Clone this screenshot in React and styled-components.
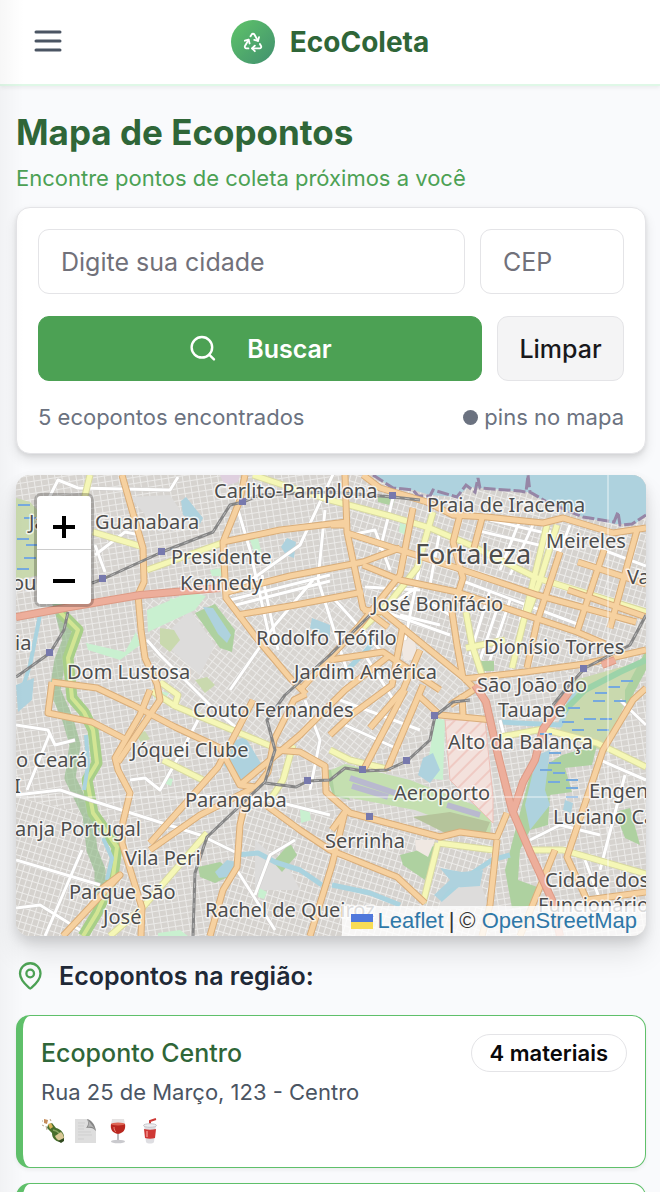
import React from "react";
import styled, { createGlobalStyle } from "styled-components";

const GlobalStyle = createGlobalStyle`
  *, *::before, *::after { box-sizing: border-box; }
  body {
    margin: 0;
    background: #f9fafc;
    font-family: Inter, "Liberation Sans", sans-serif;
    color: #1f2937;
  }
  h1, h2, h3, p, ul { margin: 0; padding: 0; }
  button, input { font: inherit; }
`;

const Page = styled.div`
  position: relative;
  overflow-x: hidden;

  &::before {
    content: "";
    position: absolute;
    z-index: 2;
    inset: 0 auto 0 0;
    width: 24px;
    background: linear-gradient(90deg, rgba(0, 0, 0, 0.03), transparent);
    pointer-events: none;
  }
`;

const Header = styled.header`
  display: grid;
  grid-template-columns: 1fr auto 1fr;
  align-items: center;
  height: 86px;
  padding: 0 28px;
  background: #fff;
  border-bottom: 2px solid #dff8e7;
  box-shadow: 0 2px 4px rgba(0, 0, 0, 0.06);
`;

const MenuButton = styled.button`
  display: flex;
  justify-self: start;
  padding: 0;
  border: 0;
  background: none;
  color: #4b5563;
`;

const Brand = styled.a`
  display: flex;
  align-items: center;
  gap: 15px;
  color: #2f6638;
  font-size: 28px;
  line-height: 40px;
  font-weight: 700;
  text-decoration: none;
`;

const BrandMark = styled.span`
  display: grid;
  place-items: center;
  width: 44px;
  height: 44px;
  border-radius: 50%;
  background: linear-gradient(135deg, #5fc469, #41906f);
`;

const Main = styled.main`
  padding: 22px 14px 22px 16px;
`;

const Title = styled.h1`
  color: #2f6638;
  font-size: 35px;
  line-height: 48px;
  font-weight: 700;
`;

const Subtitle = styled.p`
  margin-top: 6px;
  color: #4ca154;
  font-size: 22px;
  line-height: 32px;
`;

const SearchCard = styled.form`
  display: flex;
  flex-direction: column;
  gap: 22px;
  margin-top: 13px;
  padding: 21px;
  background: #fff;
  border: 1px solid #e4e4e7;
  border-radius: 14px;
  box-shadow: 0 6px 12px rgba(0, 0, 0, 0.1), 0 2px 4px rgba(0, 0, 0, 0.08);
`;

const FormRow = styled.div`
  display: flex;
  gap: 15px;
`;

const Field = styled.input`
  flex: ${(p) => (p.$narrow ? "0 0 144px" : "1 1 0")};
  min-width: 0;
  height: 65px;
  padding: 0 22px;
  border: 1px solid #e4e4e7;
  border-radius: 11px;
  background: #fff;
  font-size: 25px;

  &::placeholder { color: #71717a; opacity: 1; }
`;

const Button = styled.button`
  display: flex;
  flex: ${(p) => (p.$primary ? "1 1 0" : "0 0 127px")};
  align-items: center;
  justify-content: center;
  gap: 30px;
  height: 65px;
  padding: 0;
  border: 1px solid ${(p) => (p.$primary ? "#4ca154" : "#e4e4e7")};
  border-radius: 11px;
  background: ${(p) => (p.$primary ? "#4ca154" : "#f4f4f5")};
  color: ${(p) => (p.$primary ? "#fff" : "#18181b")};
  font-size: 25px;
  font-weight: ${(p) => (p.$primary ? 600 : 500)};
`;

const Summary = styled.div`
  display: flex;
  justify-content: space-between;
  color: #6b7280;
  font-size: 22px;
  line-height: 29px;
`;

const Legend = styled.span`
  display: flex;
  align-items: center;
  gap: 6px;

  &::before {
    content: "";
    width: 15px;
    height: 15px;
    border-radius: 50%;
    background: #6b7280;
  }
`;

const MapFrame = styled.section`
  position: relative;
  height: 461px;
  margin-top: 21px;
  overflow: hidden;
  border-radius: 14px;
  background: #dddcda;
`;

const MapShadow = styled.div`
  border-radius: 14px;
  box-shadow: 0 18px 28px rgba(0, 0, 0, 0.1), 0 6px 12px rgba(0, 0, 0, 0.12);
`;

const MapDrawing = styled.svg`
  display: block;
  width: 100%;
  height: 100%;
`;

const MapLabel = styled.text`
  fill: #4d4d4d;
  stroke: rgba(255, 255, 255, 0.75);
  stroke-width: 3px;
  stroke-linejoin: round;
  paint-order: stroke;
  font-family: "Noto Sans", sans-serif;
  font-size: ${(p) => (p.$city ? 27 : 20)}px;
`;

const ZoomControl = styled.div`
  position: absolute;
  top: 18px;
  left: 18px;
  border: 3px solid rgba(0, 0, 0, 0.22);
  border-radius: 7px;
  background-clip: padding-box;
`;

const ZoomButton = styled.button`
  display: grid;
  place-items: center;
  width: 54px;
  height: 54px;
  padding: 8px 0 0;
  border: 0;
  background: #fff;
  color: #000;

  &:first-child { border-bottom: 1px solid #ccc; border-radius: 4px 4px 0 0; }
  &:last-child { border-radius: 0 0 4px 4px; }
`;

const Attribution = styled.div`
  position: absolute;
  right: 0;
  bottom: 0;
  display: flex;
  align-items: center;
  gap: 5px;
  padding: 0 9px;
  background: rgba(255, 255, 255, 0.8);
  color: #333;
  font-family: "Liberation Sans", Arial, sans-serif;
  font-size: 22px;
  line-height: 30px;

  a { color: #2f78a8; text-decoration: none; }
  svg { display: block; }
`;

const ListHeading = styled.h2`
  display: flex;
  align-items: center;
  gap: 15px;
  margin: 22px 0 21px;
  color: #1f2937;
  font-size: 25px;
  line-height: 36px;
  font-weight: 600;
`;

const PointList = styled.ul`
  display: flex;
  flex-direction: column;
  gap: 15px;
  list-style: none;
`;

const PointCard = styled.li`
  padding: 18px 18px 23px;
  border: 1px solid #5fc06a;
  border-left-width: 7px;
  border-radius: 14px;
  background: #fff;
  box-shadow: 0 2px 4px rgba(0, 0, 0, 0.06);
`;

const PointTop = styled.div`
  display: flex;
  align-items: center;
  justify-content: space-between;
`;

const PointName = styled.h3`
  color: #2f6638;
  font-size: 25px;
  line-height: 36px;
  font-weight: 500;
`;

const Badge = styled.span`
  padding: 0 18px;
  border: 1px solid #e4e4e7;
  border-radius: 19px;
  color: #09090b;
  font-size: 22px;
  line-height: 36px;
  font-weight: 600;
`;

const Address = styled.p`
  margin-top: 4px;
  color: #4b5563;
  font-size: 22px;
  line-height: 32px;
`;

const Materials = styled.div`
  display: flex;
  gap: 8px;
  margin-top: 9px;

  svg { display: block; width: 24px; height: 27px; }
`;

const orangeRoads = [
  "122,475 132,510 143,548 144,582 138,595 141,630 145,658 157,684 160,700 118,762",
  "150,690 140,715 115,758 118,770 130,793 123,822 122,843 142,908 141,936",
  "245,475 240,500 223,542 226,598 258,640 290,678 306,694",
  "223,542 280,530 347,522",
  "227,592 290,576 363,562 400,548",
  "237,615 290,606 363,592",
  "52,682 97,688 133,705 175,727 220,748 240,785 256,787 268,772 274,740 294,700 306,694",
  "52,682 48,713 92,722 125,739",
  "253,700 240,725 218,767 150,843",
  "253,788 200,815 150,850",
  "247,793 240,825 237,867 223,890 210,936",
  "263,803 300,830 330,850 397,877 425,903",
  "100,890 120,875 63,936",
  "332,830 345,812 332,865 310,936",
  "275,750 300,752 325,766 326,792 350,813 440,837 460,832 497,837 507,813",
  "240,785 300,735 345,690 390,655",
  "363,475 380,488 427,502 453,515 487,517 543,523 563,518 613,533 646,528",
  "345,475 347,532 363,608 388,627",
  "331,525 347,525",
  "347,533 400,550 457,568 537,595 636,622",
  "363,565 400,580 457,592 577,632 605,644",
  "413,508 400,575 360,625 300,690",
  "460,515 453,542 463,578 452,612 457,645 463,678",
  "482,518 474,548",
  "363,610 383,612 463,677 475,689 450,705",
  "463,679 525,672 585,664 646,650",
  "560,552 537,622 527,668",
  "578,562 646,584",
  "568,590 646,617",
  "604,550 577,632",
  "637,530 610,628",
  "420,650 403,690 370,728",
  "403,625 392,685 350,716 330,735",
  "405,690 363,771", "423,685 387,770",
  "418,695 440,715 493,720",
  "462,695 463,716",
  "330,660 383,652 440,690",
  "646,688 633,700 603,750 567,857 587,900 646,892",
  "497,840 490,905 482,936",
  "555,850 520,936",
];
const yellowRoads = [
  "90,475 82,508", "93,532 143,547", "147,570 222,543", "253,475 283,485 330,500",
  "330,500 390,516 430,528 470,545 537,578 646,612",
  "433,512 425,540 417,568 390,602 363,628",
  "547,525 530,595 512,668", "557,525 540,580 527,615",
  "466,612 472,645 482,675", "466,648 505,640",
  "152,691 175,706 273,747", "163,760 203,780",
  "293,745 283,780 270,800", "207,833 143,907 110,936",
  "160,682 178,695 174,708",
  "330,750 350,760 387,769", "438,843 493,850", "438,843 423,903",
  "500,737 543,729 597,743 646,767", "530,850 563,850 646,874",
];
const redRoads = [
  "16,617 70,607 140,595 220,588",
  "475,685 486,702 498,755 512,810 530,852 552,900 560,936",
  "570,690 560,705 543,729 535,760 523,782 513,812",
  "602,665 615,660",
];
const whiteRoads = [
  "48,500 58,480 78,488 170,490 178,477", "95,555 125,532 140,535", "95,545 105,572",
  "230,600 330,575", "232,606 330,581", "230,595 300,545 335,470",
  "238,510 250,550 270,640", "262,575 278,650", "325,510 318,580 350,680", "313,580 275,625 230,690",
  "147,640 160,655 215,710 245,735", "16,725 48,730 55,745 75,740", "16,795 60,790 90,800 200,835 235,852",
  "16,860 100,885", "16,908 40,905 80,930", "82,850 45,936", "50,733 27,790", "130,780 145,778 160,790 178,758 198,720",
  "190,795 220,797 270,800 330,815", "235,867 275,930", "255,895 270,855 295,840", "305,700 320,740 310,790",
  "350,535 375,530 390,570", "395,490 380,550", "365,587 420,590", "425,540 405,640", "440,530 430,585",
  "475,530 560,550", "490,520 575,540", "520,520 500,570", "535,520 510,575", "550,530 520,620", "570,525 545,590",
  "490,590 470,655", "500,600 480,660", "510,600 490,660", "590,545 646,566", "460,580 580,625",
  "335,600 380,650", "340,640 420,585", "365,655 400,710", "340,700 420,730", "345,725 400,750",
  "500,720 508,750", "530,840 560,825 600,835", "600,760 646,780", "625,775 600,870", "585,860 600,900", "620,700 646,725",
  "425,600 450,615", "380,610 450,635", "400,615 440,625",
];
const railways = [
  "16,677 50,653 64,630 68,612",
  "92,583 103,579 162,552 213,532 230,505 243,502 260,495 330,492 393,497 420,500",
  "470,700 453,702 435,716 430,740 407,761 387,770 363,771 345,768 330,780 308,781 296,787 265,783",
  "370,615 330,655 285,695 267,720 275,750 265,782 207,837 195,873 193,936",
  "646,615 630,645 585,668 565,690 553,705",
];
const stations = [[243, 502], [162, 552], [103, 579], [50, 653], [393, 496], [584, 669], [435, 716], [407, 761], [363, 770], [308, 781], [370, 817]];
const wetMarks = [
  [18, 505], [24, 518], [17, 539], [26, 545], [24, 558], [17, 569], [621, 681], [608, 687], [595, 693], [593, 701], [614, 701],
  [568, 708], [584, 719], [562, 722], [600, 719], [572, 730], [597, 730], [549, 753], [549, 763], [540, 770], [553, 773], [548, 782], [566, 780], [566, 788], [566, 797], [540, 734],
];
const labels = [
  ["Carlito-Pamplona", 214, 498], ["Praia de Iracema", 427, 512], ["Guanabara", 95, 529], ["Ja", 29, 529],
  ["Meireles", 546, 548], ["Presidente", 171, 564], ["Kennedy", 180, 590], ["ouaçu", 12, 590], ["Varjota", 627, 584],
  ["José Bonifácio", 372, 611], ["Rodolfo Teófilo", 256, 645], ["Dionísio Torres", 484, 654], ["ia", 15, 650],
  ["Dom Lustosa", 67, 679], ["Jardim América", 294, 679], ["São João do", 477, 692], ["Tauape", 498, 717],
  ["Couto Fernandes", 193, 717], ["Jóquei Clube", 131, 757], ["Alto da Balança", 448, 749], ["o Ceará", 16, 767], ["I", 14, 793],
  ["Aeroporto", 394, 800], ["Parangaba", 185, 807], ["Engenheiro", 589, 798], ["Luciano Cavalcante", 553, 824],
  ["anja Portugal", 15, 836], ["Serrinha", 325, 848], ["Vila Peri", 125, 865], ["Parque São", 69, 899], ["José", 103, 924],
  ["Cidade dos", 545, 887], ["Funcionários", 538, 912], ["Rachel de Queiroz", 205, 917],
];

function Lines({ items, color, width, dash }) {
  return (
    <g fill="none" stroke={color} strokeWidth={width} strokeLinejoin="round" strokeDasharray={dash}>
      {items.map((points) => <polyline key={points} points={points} />)}
    </g>
  );
}

function CityMap() {
  return (
    <MapDrawing viewBox="16 475 630 461" preserveAspectRatio="xMidYMid slice" role="img" aria-label="Mapa de Fortaleza">
      <defs>
        <pattern id="blocks" width="7" height="6" patternUnits="userSpaceOnUse" patternTransform="rotate(-9)">
          <rect width="7" height="6" fill="#ebeae8" />
          <rect x="1" y="1" width="6" height="5" fill="#d6d3cf" />
        </pattern>
        <pattern id="blocksTilted" width="6" height="7" patternUnits="userSpaceOnUse" patternTransform="rotate(17)">
          <rect width="6" height="7" fill="#edecea" />
          <rect x="1" y="1" width="5" height="6" fill="#d5d2ce" />
        </pattern>
        <pattern id="blocksSteep" width="7" height="6" patternUnits="userSpaceOnUse" patternTransform="rotate(38)">
          <rect width="7" height="6" fill="#ebeae8" />
          <rect x="1" y="1" width="6" height="5" fill="#d8d5d1" />
        </pattern>
        <pattern id="hatch" width="10" height="10" patternUnits="userSpaceOnUse" patternTransform="rotate(45)">
          <rect width="10" height="10" fill="#f3e1dc" />
          <rect width="2" height="10" fill="#efcac3" />
        </pattern>
      </defs>
      <rect x="16" y="475" width="630" height="461" fill="url(#blocks)" />
      <path d="M345 475H646V670L463 678 363 610Z" fill="url(#blocksTilted)" />
      <path d="M227 598L363 600 463 678 445 720 345 768 275 750 160 700 145 600Z" fill="url(#blocksSteep)" />
      <path d="M16 797L120 822 142 936H16Z" fill="url(#blocksTilted)" />
      <path d="M250 800L440 837 497 840 490 936H210Z" fill="url(#blocksTilted)" />

      <g fill="#dddcdb">
        <path d="M130 497L170 495 190 525 160 532Z" /><path d="M160 640L190 610 215 645 200 675Z" />
        <path d="M440 895L480 880 488 906 440 910Z" /><path d="M255 840L290 870 300 890 255 890Z" />
        <path d="M340 770L400 775 460 800 490 820 420 817Z" />
      </g>
      <g fill="#c9f0d0">
        <path d="M86 643L125 652 136 632 140 645 120 660 88 650Z" /><path d="M147 610L190 592 206 596 195 610 148 632Z" />
        <path d="M170 598l8 2-4 14-5-2z" /><path d="M210 570l17-3v9h-15z" /><path d="M250 540l8-2 4 17-6 2z" />
        <path d="M435 718L445 720 443 780 425 778 430 750Z" /><path d="M300 810l9-2 2 12-10 3z" />
        <path d="M400 523l10 3-2 10-9-4z" /><path d="M155 690l14 3-6 8-9-3z" /><path d="M158 933l22-3 8 6h-30z" />
        <path d="M259 888l8 4-3 7-6-2z" /><path d="M165 777l8 2-2 7-7-3z" />
      </g>
      <g fill="#c9d9ae">
        <path d="M16 498L30 502 42 515 40 575 16 580Z" />
        <path d="M160 628l14 2 6 10-10 12-10-8z" /><path d="M195 680l12-3 8 8-10 8z" />
        <path d="M570 700L575 680 646 660 620 715 600 750 560 730Z" />
        <path d="M135 735l10-4 5 8-9 3z" />
      </g>
      <g fill="#aed1a0">
        <path d="M195 613L215 604 235 630 232 652 220 648Z" />
        <path d="M273 862L290 843 297 855 282 872Z" /><path d="M198 867L220 862 237 873 215 883 200 877Z" />
        <path d="M325 770L338 770 350 800 333 796Z" /><path d="M400 855L438 845 425 880 403 865Z" />
        <path d="M480 661h14v10h-15z" /><path d="M378 496l17 3-2 7-15-4z" />
        <path d="M562 755L597 745 592 765 565 768 572 792 550 795 548 825 530 830 520 850 518 880 540 888 535 905 512 908 505 870 518 820 530 775Z" />
        <path d="M615 812L630 808 640 845 625 838Z" /><path d="M625 690L646 650V670L625 710Z" />
      </g>
      <path d="M331 770L345 764 410 780 492 812 490 836 455 825 415 810 335 795Z" fill="#c4dfb0" />
      <path d="M413 817L450 812 490 822 485 834 445 833Z" fill="#b5c49b" />
      <path d="M445 720L485 720 493 797 493 823 450 780Z" fill="url(#hatch)" stroke="#ecc0b8" />
      <g stroke="#b9b9cf" strokeWidth="6" fill="none">
        <path d="M350 778L404 796M447 805L480 815M352 786L388 797" />
      </g>
      <path d="M400 638l14-1 4 22-14 2z" fill="#f0e8e2" /><path d="M415 840l20 0-7 17-12-7z" fill="#f0e8e2" />
      <path d="M220 475H240L238 482 225 486Z" fill="#dfd0df" />

      <g fill="none" strokeLinejoin="round">
        <path d="M57 600L68 640 60 660 55 690 68 720 75 745 70 778 88 815 92 850 100 870 100 905" stroke="#93bd8c" strokeOpacity=".65" strokeWidth="11" />
        <path d="M60 612L78 630 68 658 72 698 84 712 93 730 97 763 87 780 93 813 117 847 113 877 97 913 83 936" stroke="#a8cf88" strokeWidth="11" />
        <path d="M60 612L78 630 68 658 72 698 84 712 93 730 97 763 87 780 93 813 117 847 113 877 97 913 83 936" stroke="#d3e594" strokeWidth="4" />
        <path d="M86 735L88 765 84 790M103 838L112 858 107 880M40 615L30 665 22 690" stroke="#aad3df" strokeWidth="4" />
        <path d="M235 855L258 853 275 862 300 870 322 885M332 885L370 893 400 905M345 672L365 652 375 640M500 722L560 725 575 690M440 900L465 878 492 860 510 855" stroke="#aad3df" strokeWidth="5" />
        <path d="M563 712L585 690 620 672 646 660" stroke="#9cd3a9" strokeWidth="6" />
      </g>
      <g fill="#aed2de">
        <path d="M373 475L393 488 413 490 430 495 457 497 468 487 527 492 547 502 583 517 615 524 635 524 646 515V475Z" />
        <path d="M181 501L186 497 203 518 200 524 183 515Z" /><path d="M203 607L213 608 231 635 227 643 218 634Z" />
        <path d="M287 538l9 4-2 16-8-3-5-8z" /><path d="M312 618L330 625V637L310 628Z" />
        <path d="M228 743L245 737 262 765 240 781 224 766Z" /><path d="M215 872l12-12 10 2-2 14-16 2z" />
        <path d="M423 758L433 753 440 770 430 783 418 775Z" /><path d="M440 868L462 872 483 870 480 886 450 888 440 900 434 895 450 880Z" />
        <path d="M537 755L550 750 545 790 550 805 530 830 525 805Z" /><path d="M16 685L34 678 32 700 18 712Z" />
        <path d="M565 800l8 3-2 10-8-3z" />
      </g>
      <polyline points="373,475 393,488 413,490 418,496 430,496 433,490 457,497 466,485 475,492 478,478 480,488 520,491 526,492 528,475 530,492 547,502 583,517 614,522 618,512 620,525 632,524 646,515" fill="none" stroke="#9686a6" strokeWidth="3" strokeDasharray="12 3" />

      <Lines items={whiteRoads} color="#cfcdcb" width="4" />
      <Lines items={whiteRoads} color="#ffffff" width="3" />
      <Lines items={yellowRoads} color="#d9daa0" width="7" />
      <Lines items={yellowRoads} color="#f5f7b6" width="5" />
      <Lines items={orangeRoads} color="#d9ad79" width="7" />
      <Lines items={orangeRoads} color="#f6d1a0" width="5" />
      <Lines items={redRoads} color="#dd9a85" width="8" />
      <Lines items={redRoads} color="#edae9b" width="6" />
      <Lines items={railways} color="#858585" width="3" />
      <Lines items={railways} color="#b5b5b5" width="1" dash="5 5" />
      {stations.map(([x, y]) => <rect key={`${x}-${y}`} x={x - 4} y={y - 4} width="7" height="7" fill="#7779ad" />)}
      <path d={wetMarks.map(([x, y]) => `M${x} ${y}h12`).join("")} stroke="#76a9dd" strokeWidth="2" />
      <path d="M16 797H646M608 475V936" stroke="#fff" strokeOpacity=".75" />
      {labels.map(([name, x, y]) => <MapLabel key={name + y} x={x} y={y}>{name}</MapLabel>)}
      <MapLabel $city x="415" y="564">Fortaleza</MapLabel>
    </MapDrawing>
  );
}

const iconStroke = { fill: "none", stroke: "currentColor", strokeLinecap: "round", strokeLinejoin: "round" };

const MenuIcon = () => (
  <svg width="40" height="40" viewBox="0 0 40 40" {...iconStroke} strokeWidth="3" aria-hidden="true">
    <path d="M8 10H32M8 19H32M8 28H32" />
  </svg>
);

const RecycleIcon = () => (
  <svg width="22" height="22" viewBox="0 0 24 24" {...iconStroke} stroke="#fff" strokeWidth="2" aria-hidden="true">
    <path d="M7 19H4.815a1.830 1.830 0 0 1-1.570-.881 1.785 1.785 0 0 1-.004-1.784L7.196 9.500" />
    <path d="M11 19h8.203a1.830 1.830 0 0 0 1.556-.890 1.784 1.784 0 0 0 0-1.775l-1.226-2.120" />
    <path d="m14 16-3 3 3 3" /><path d="M8.293 13.596 7.196 9.500 3.100 10.598" />
    <path d="m9.344 5.811 1.093-1.892A1.830 1.830 0 0 1 11.985 3a1.784 1.784 0 0 1 1.546.888l3.943 6.843" />
    <path d="m13.378 9.633 4.096 1.098 1.097-4.096" />
  </svg>
);

const SearchIcon = () => (
  <svg width="29" height="29" viewBox="0 0 24 24" {...iconStroke} strokeWidth="2" aria-hidden="true">
    <circle cx="11.500" cy="11" r="8.500" /><path d="m21.500 21-4-4" />
  </svg>
);

const PinIcon = () => (
  <svg width="28" height="30" viewBox="0 0 28 30" {...iconStroke} stroke="#4ca154" strokeWidth="2.300" aria-hidden="true">
    <path d="M24.500 12.500c0 6.500-7 12.500-9.300 14.500a1.500 1.500 0 0 1-2 0C11 25 4 19 4 12.500a10.200 10.200 0 0 1 20.500 0Z" />
    <circle cx="14.200" cy="12.500" r="3.800" />
  </svg>
);

const ZoomSign = ({ plus }) => (
  <svg width="24" height="24" viewBox="0 0 24 24" stroke="currentColor" strokeWidth="4" aria-hidden="true">
    <path d={plus ? "M1 12H23M12 1V23" : "M1 12H23"} />
  </svg>
);

const BottleIcon = () => (
  <svg viewBox="0 0 24 27" role="img" aria-label="Vidro">
    <path d="M7 8l4-2 4 5c5 1 9 6 8 11l-4 3c-5-1-8-4-8-9L6 11z" fill="#496f2d" />
    <path d="M12 13c5 1 8 4 8 9" fill="none" stroke="#87a560" strokeWidth="1.500" />
    <path d="M14 19l6-4c2 2 3 4 3 7l-4 2c-3-1-4-3-5-5z" fill="#d9c795" />
    <path d="M17 24l6-3v3l-3 2z" fill="#304a20" />
    <path d="M7 7l3-1 2 4-3 2z" fill="#d7b25a" />
    <path d="M3 2l4 1-1 4-3-1z" fill="#c58d5c" />
    <path d="M1 8l2 1M5 9l1 4M9 2l1 2M1 4l1 0" stroke="#b8a894" />
  </svg>
);
const PaperIcon = () => (
  <svg viewBox="0 0 24 27" role="img" aria-label="Papel">
    <path d="M2 2h12l9 11v13H2z" fill="#dedede" />
    <path d="M14 2c2 4 1 7-1 9 4-1 8 0 10 3C22 8 19 3 14 2z" fill="#858585" />
    <path d="M14 2c2 3 2 5 1 8 3-1 6 0 8 3" fill="#b5b5b5" />
    <path d="M5 6h7M5 9h6M5 12h6M5 15h13M5 18h14M5 22h6" stroke="#cfcfcf" />
  </svg>
);
const WineIcon = () => (
  <svg viewBox="0 0 24 27" role="img" aria-label="Cristal">
    <path d="M7 2h12c2 8 1 14-6 15C6 16 5 10 7 2z" fill="#e4e2e2" />
    <path d="M6 7h14c1 6-2 9-7 10-5-1-8-4-7-10z" fill="#b9271f" />
    <ellipse cx="13" cy="7" rx="7" ry="1.500" fill="#dd6554" />
    <path d="M13 17v7" stroke="#bcbcc0" strokeWidth="2" />
    <ellipse cx="13" cy="24.500" rx="7" ry="1.700" fill="#c9c9cd" />
    <path d="M9 10c0 3 1 4 2 5" fill="none" stroke="#ee897a" />
  </svg>
);
const CupIcon = () => (
  <svg viewBox="0 0 24 27" role="img" aria-label="Plástico">
    <path d="M13 8V4l6-2" fill="none" stroke="#ce3734" strokeWidth="2" />
    <path d="M7 8h12l-2 17c-1 2-7 2-8 0z" fill="#dedee2" />
    <path d="M7 12c4 1 8 1 12 0l-1 9c-3 1-7 1-10 0z" fill="#cf3835" />
    <ellipse cx="13" cy="8.500" rx="6.500" ry="1.800" fill="#ededf0" stroke="#c6c6ca" />
    <path d="M10 14v6" stroke="#e87974" strokeWidth="2" />
  </svg>
);

function Point({ name, address, count }) {
  return (
    <PointCard>
      <PointTop>
        <PointName>{name}</PointName>
        <Badge>{count} materiais</Badge>
      </PointTop>
      <Address>{address}</Address>
      <Materials><BottleIcon /><PaperIcon /><WineIcon /><CupIcon /></Materials>
    </PointCard>
  );
}

export default function App() {
  return (
    <Page>
      <GlobalStyle />
      <Header>
        <MenuButton type="button" aria-label="Abrir menu"><MenuIcon /></MenuButton>
        <Brand href="#inicio"><BrandMark><RecycleIcon /></BrandMark>EcoColeta</Brand>
      </Header>
      <Main>
        <Title>Mapa de Ecopontos</Title>
        <Subtitle>Encontre pontos de coleta próximos a você</Subtitle>
        <SearchCard onSubmit={(event) => event.preventDefault()}>
          <FormRow>
            <Field aria-label="Cidade" placeholder="Digite sua cidade" />
            <Field $narrow aria-label="CEP" placeholder="CEP" />
          </FormRow>
          <FormRow>
            <Button $primary type="submit"><SearchIcon />Buscar</Button>
            <Button type="reset">Limpar</Button>
          </FormRow>
          <Summary><span>5 ecopontos encontrados</span><Legend>pins no mapa</Legend></Summary>
        </SearchCard>
        <MapShadow>
          <MapFrame>
            <CityMap />
            <ZoomControl>
              <ZoomButton type="button" aria-label="Aproximar"><ZoomSign plus /></ZoomButton>
              <ZoomButton type="button" aria-label="Afastar"><ZoomSign /></ZoomButton>
            </ZoomControl>
            <Attribution>
              <svg width="22" height="15" viewBox="0 0 22 15" aria-hidden="true">
                <path fill="#5078db" d="M0 0h22v8H0z" /><path fill="#f8dc55" d="M0 8h22v7H0z" />
              </svg>
              <a href="#leaflet">Leaflet</a>
              <span>|</span>
              <span>© <a href="#openstreetmap">OpenStreetMap</a></span>
            </Attribution>
          </MapFrame>
        </MapShadow>
        <ListHeading><PinIcon />Ecopontos na região:</ListHeading>
        <PointList>
          <Point name="Ecoponto Centro" address="Rua 25 de Março, 123 - Centro" count={4} />
          <Point name="Ecoponto Aldeota" address="Av. Santos Dumont, 456 - Aldeota" count={4} />
        </PointList>
      </Main>
    </Page>
  );
}
